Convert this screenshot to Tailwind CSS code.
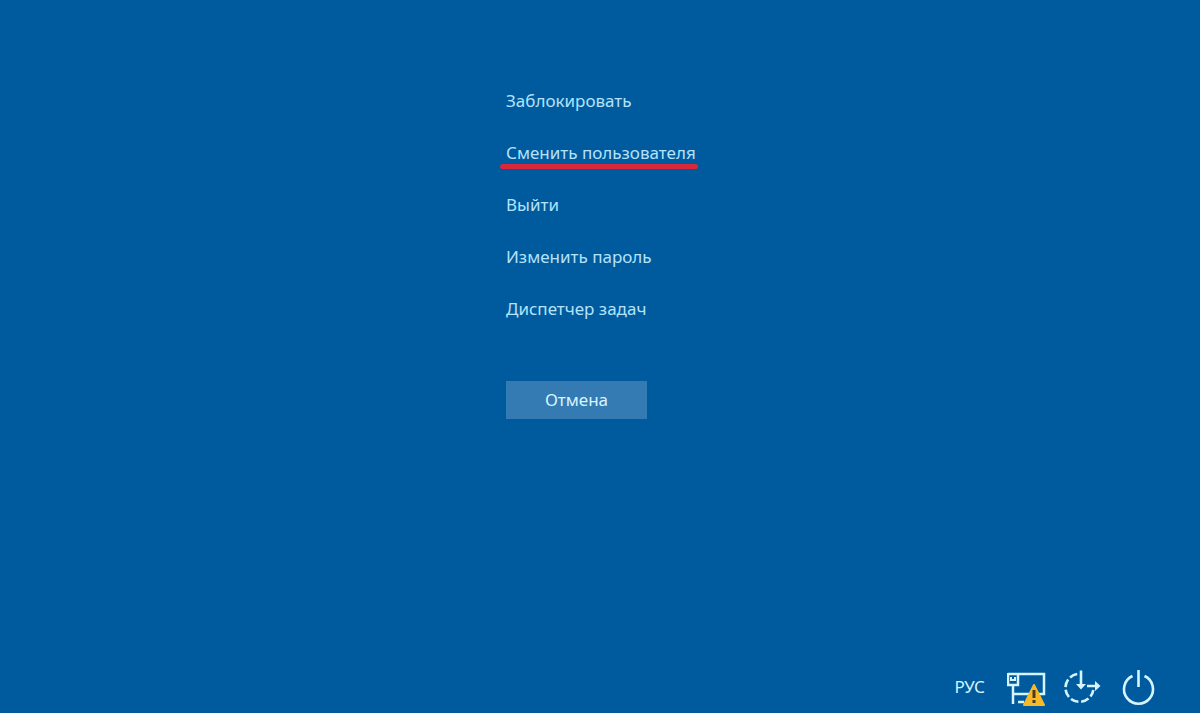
<!DOCTYPE html>
<html lang="ru">
<head>
<meta charset="utf-8">
<meta name="viewport" content="width=device-width, initial-scale=1">
<title>Параметры безопасности</title>
<script src="https://cdn.jsdelivr.net/npm/@tailwindcss/browser@4"></script>
</head>
<body class="flex min-h-screen flex-col bg-[#005a9e] font-['Noto_Sans','Open_Sans',sans-serif] text-[17px] leading-6 text-[#b4e2fa]">
  <main class="flex grow flex-col items-center pt-[89px]">
    <div class="flex w-[188px] flex-col items-start">
      <nav aria-label="Действия" class="flex flex-col items-start gap-7 whitespace-nowrap">
        <button type="button">Заблокировать</button>
        <button type="button" class="relative">Сменить пользователя
          <span class="absolute -left-[6px] top-[23px] h-[5px] w-[198px] rounded-full bg-[#d9283c]"></span>
        </button>
        <button type="button">Выйти</button>
        <button type="button">Изменить пароль</button>
        <button type="button">Диспетчер задач</button>
      </nav>
      <button type="button" class="mt-[60px] h-[38px] w-[141px] bg-[#347bb3] text-[#d8f4ff]">Отмена</button>
    </div>
  </main>
  <footer class="flex items-center justify-end gap-4 pr-[41px] pb-1 text-[#d4f5ff]">
    <button type="button" aria-label="РУС, язык ввода" class="mr-1.5">РУС</button>
    <button type="button" aria-label="Сеть">
      <svg class="h-11 w-10" viewBox="0 0 40 44" fill="none" stroke="currentColor" stroke-width="2.500">
        <path d="M1 9H37V29H6M1 8V20H11V9M6 20V39M11 37H17"/>
        <path d="M4 12V15H8V12" stroke-width="2"/>
        <path d="M27 20L37 40H17Z" fill="#f7b928" stroke="#f7b928" stroke-width="2" stroke-linejoin="round"/>
        <path d="M27 25V33M27 35V38" stroke="#4a3a20" stroke-width="3"/>
      </svg>
    </button>
    <button type="button" aria-label="Специальные возможности">
      <svg class="h-11 w-10" viewBox="0 0 40 44" fill="none" stroke="currentColor">
        <path d="M14.200 9A14 14 0 1 0 30.300 25" stroke-width="2.600" stroke-dasharray="8 2.800"/>
        <path d="M18 5.500V20M24 21H34" stroke-width="2.600"/>
        <path d="M13 19H23L18 24.500ZM32 16V26L37.500 21Z" fill="currentColor" stroke="none"/>
      </svg>
    </button>
    <button type="button" aria-label="Завершение работы">
      <svg class="h-11 w-10" viewBox="0 0 40 44" fill="none" stroke="currentColor" stroke-width="2.600">
        <path d="M13.500 11A14.500 14.500 0 1 0 25.500 11M19.500 5V22"/>
      </svg>
    </button>
  </footer>
</body>
</html>
